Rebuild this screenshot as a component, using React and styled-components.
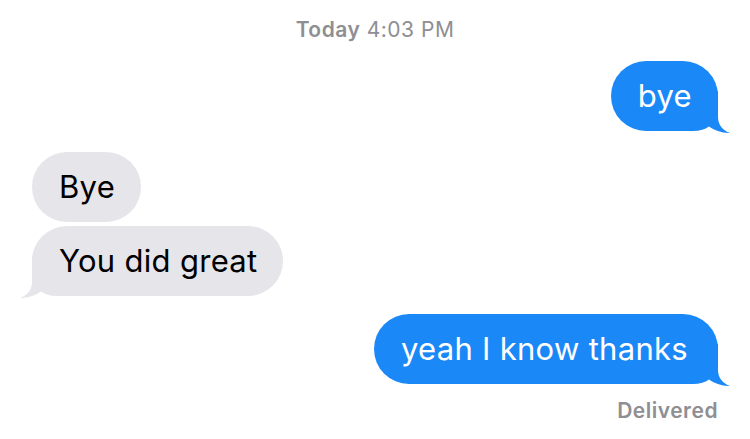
import React from "react";
import styled, { createGlobalStyle, css } from "styled-components";

const BLUE = "#1b88f8";
const GRAY = "#e5e5ea";

const Global = createGlobalStyle`
  html, body { margin: 0; padding: 0; background: #ffffff; }
  body { font-family: Inter, "Helvetica Neue", "Liberation Sans", Arial, sans-serif; -webkit-font-smoothing: antialiased; }
`;

const Thread = styled.div`
  width: 750px;
  height: 439px;
  box-sizing: border-box;
  padding: 18px 32px 0;
  display: flex;
  flex-direction: column;
  background: #fff;
  overflow: hidden;
`;

const Stamp = styled.div`
  text-align: center;
  font-size: 21px;
  line-height: 24px;
  letter-spacing: 0.5px;
  color: #8e8e93;
  margin-bottom: 19px;
  b { font-weight: 600; }
`;

const Group = styled.div`
  display: flex;
  flex-direction: column;
  align-items: ${(p) => (p.$me ? "flex-end" : "flex-start")};
  gap: 4px;
  margin-bottom: ${(p) => p.$gap || 0}px;
`;

const Bubble = styled.div`
  position: relative;
  font-size: 31px;
  line-height: 36px;
  letter-spacing: 0.3px;
  padding: 17px ${(p) => (p.$wide ? 30 : 26)}px 17px 27px;
  border-radius: 35px;
  ${(p) =>
    p.$me
      ? css`
          background: ${BLUE};
          color: #fff;
        `
      : css`
          background: ${GRAY};
          color: #000;
        `}
`;

const Text = styled.span`
  position: relative;
  z-index: 1;
`;

const Tail = styled.svg`
  position: absolute;
  z-index: 0;
  bottom: -3px;
  width: 50px;
  height: 43px;
  ${(p) =>
    p.$me
      ? css`
          right: -15px;
        `
      : css`
          left: -15px;
          transform: scaleX(-1);
        `}
`;

const Status = styled.div`
  align-self: flex-end;
  margin-top: 11px;
  font-size: 21px;
  line-height: 24px;
  letter-spacing: 0.5px;
  font-weight: 600;
  color: #8e8e93;
`;

function Msg({ me, tail, wide, children }) {
  return (
    <Bubble $me={me} $wide={wide}>
      {tail && (
        <Tail $me={me} viewBox="0 0 50 43" aria-hidden="true">
          <path
            d="M0 0 H35 V26 C35 34 40 39.5 47 42 C40 42.6 31 39.2 26 35.6 C22 38.6 17 40 10 40 H0 Z"
            fill={me ? BLUE : GRAY}
          />
        </Tail>
      )}
      <Text>{children}</Text>
    </Bubble>
  );
}

export default function App() {
  return (
    <>
      <Global />
      <Thread>
        <Stamp>
          <b>Today</b> 4:03 PM
        </Stamp>
        <Group $me $gap={21}>
          <Msg me tail>bye</Msg>
        </Group>
        <Group $gap={18}>
          <Msg>Bye</Msg>
          <Msg tail>You did great</Msg>
        </Group>
        <Group $me>
          <Msg me tail wide>yeah I know thanks</Msg>
          <Status>Delivered</Status>
        </Group>
      </Thread>
    </>
  );
}
